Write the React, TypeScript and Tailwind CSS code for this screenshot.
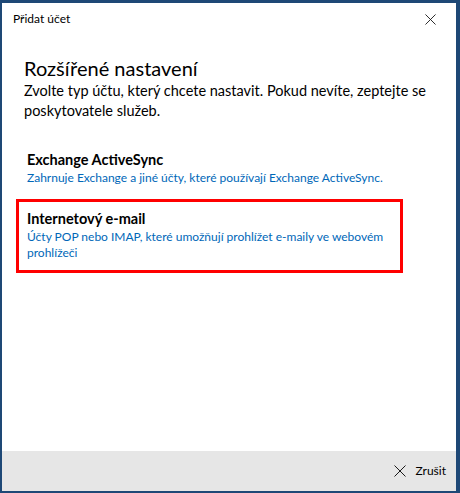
import React from "react"

const font = { fontFamily: 'Lato, "Noto Sans", sans-serif' }

function CloseGlyph({ size }: { size: number }) {
    return (
        <svg width={size} height={size} viewBox="0 0 12 12" fill="none" stroke="#1a1a1a" strokeWidth={1}>
            <path d="M0.5 0.5 L11.5 11.5 M11.5 0.5 L0.5 11.5" />
        </svg>
    )
}

function AccountOption({ title, description, highlighted }: { title: string; description: string; highlighted?: boolean }) {
    return (
        <div
            className={
                highlighted
                    ? "ml-[14px] w-[387px] border-[3px] border-[#ff0000] pb-[9px] pl-[8px] pr-[4px] pt-[7px]"
                    : "ml-[14px] w-[387px] border-[3px] border-transparent pb-[10px] pl-[8px] pr-[4px] pt-[6px]"
            }
        >
            <p className="text-[14.5px] font-bold leading-[20px] text-black">{title}</p>
            <p className="text-[12px] leading-[16px] text-[#0067b8]">{description}</p>
        </div>
    )
}

export default function App() {
    return (
        <div
            style={font}
            className="flex h-[493px] w-[460px] flex-col border-b-2 border-l-2 border-r-4 border-t-[3px] border-[#1e4876] bg-white"
        >
            <div className="flex h-[32px] shrink-0 items-center justify-between pl-[11px] pr-[20px]">
                <span className="text-[12px] text-black">Přidat účet</span>
                <CloseGlyph size={11} />
            </div>

            <div className="flex-1 pt-[20px]">
                <div className="pl-[22px] pr-[8px]">
                    <h1 className="text-[20px] font-normal leading-[26px] text-black">Rozšířené nastavení</h1>
                    <p className="text-[14.5px] leading-[20px] text-black">
                        Zvolte typ účtu, který chcete nastavit. Pokud nevíte, zeptejte se poskytovatele služeb.
                    </p>
                </div>

                <div className="mt-[20px] flex flex-col">
                    <AccountOption
                        title="Exchange ActiveSync"
                        description="Zahrnuje Exchange a jiné účty, které používají Exchange ActiveSync."
                    />
                    <AccountOption
                        highlighted
                        title="Internetový e-mail"
                        description="Účty POP nebo IMAP, které umožňují prohlížet e-maily ve webovém prohlížeči"
                    />
                </div>
            </div>

            <div className="flex h-[40px] shrink-0 items-center justify-end gap-[10px] bg-[#e6e6e6] pr-[10px]">
                <CloseGlyph size={12} />
                <span className="text-[12px] text-black">Zrušit</span>
            </div>
        </div>
    )
}
